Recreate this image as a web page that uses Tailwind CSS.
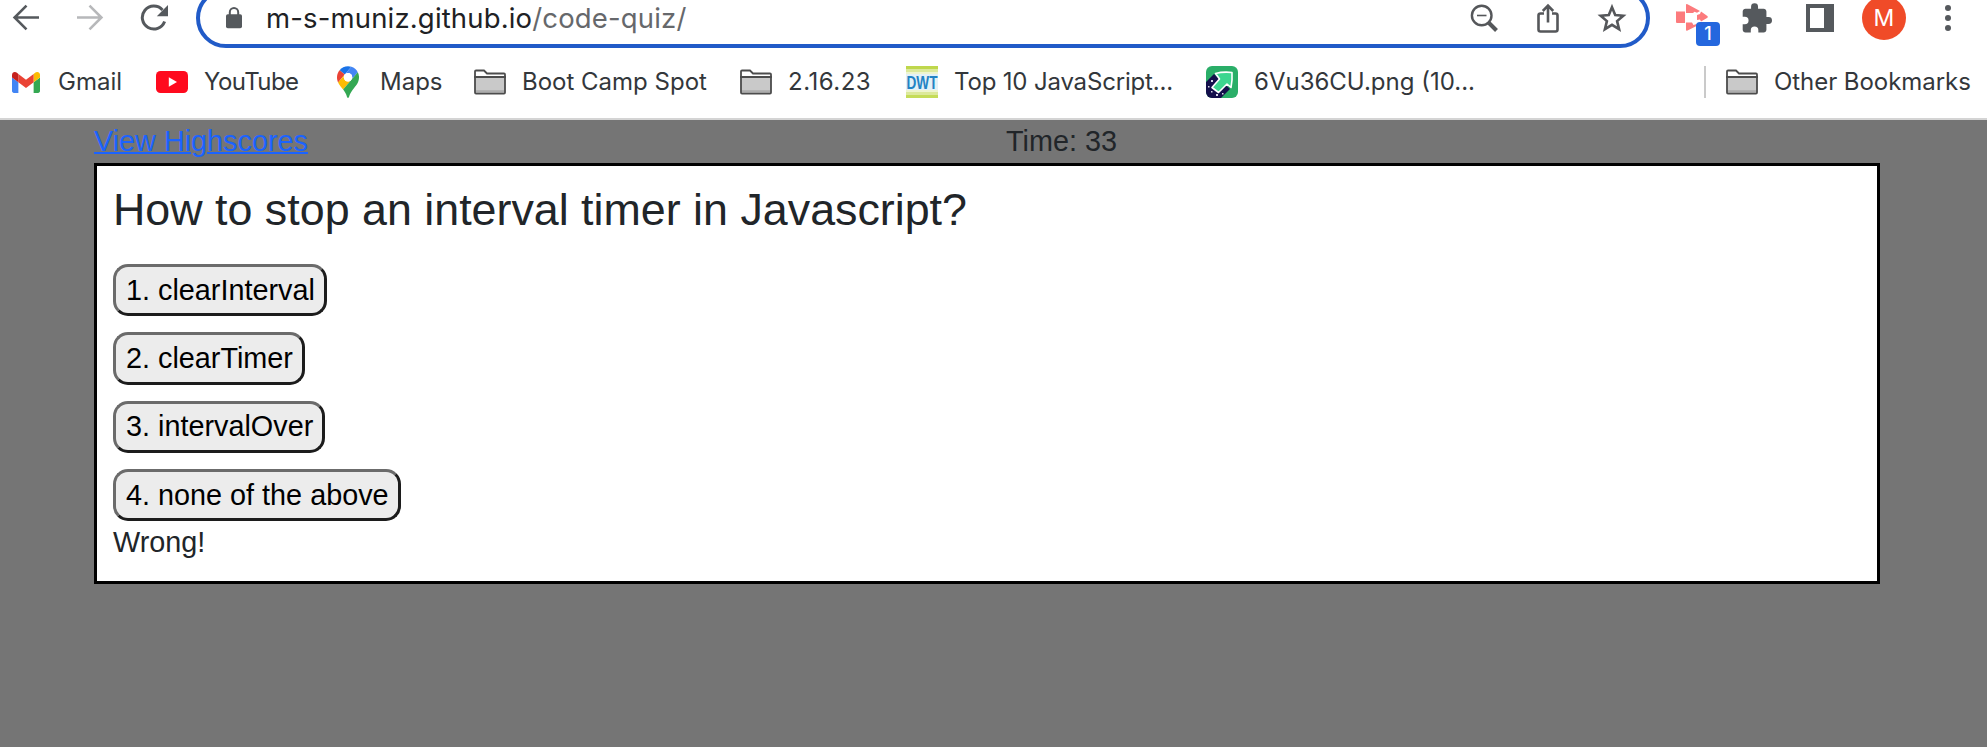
<!DOCTYPE html>
<html lang="en">
<head>
<meta charset="utf-8">
<title>Code Quiz</title>
<script src="https://cdn.jsdelivr.net/npm/@tailwindcss/browser@4"></script>
</head>
<body class="flex h-[747px] w-[1987px] flex-col overflow-hidden bg-[#757575] font-['Liberation_Sans',Arial,sans-serif] text-[#212529]">
<header class="h-[120px] shrink-0 overflow-hidden border-b-2 border-[#d4d4d4] bg-white font-[Inter,sans-serif] text-[#33373b]">
  <div class="-mt-3 flex h-[60px] items-center">
    <svg class="ml-[12px] block h-7 w-7 shrink-0" viewBox="0 0 28 28" fill="none" stroke="#55595d" stroke-width="2.6"><path d="M27 13.5H2.5M14.5 1.7L2.6 13.5l11.9 11.8"/></svg>
    <svg class="ml-[36px] block h-7 w-7 shrink-0" viewBox="0 0 28 28" fill="none" stroke="#b7b8ba" stroke-width="2.6"><path d="M1 13.5h24.5M13.5 1.7L25.4 13.5l-11.9 11.8"/></svg>
    <svg class="ml-[36px] block h-7 w-7 shrink-0" viewBox="0 0 28 28" fill="none" stroke="#55595d" stroke-width="3"><path d="M24.6 17.5A11.5 11.5 0 1 1 22.5 6"/><path d="M28 1v11.2H16.8z" fill="#55595d" stroke="none"/></svg>
    <div class="ml-[28px] flex h-[60px] w-[1454px] shrink-0 items-center rounded-full border-4 border-[#215bc8]">
      <svg class="ml-[26px] block h-[22px] w-4 shrink-0" viewBox="0 0 16 22"><rect y="7.3" width="16" height="14" rx="1.8" fill="#55595d"/><path d="M3.8 8V5.2a4.2 4.2 0 0 1 8.4 0V8" fill="none" stroke="#55595d" stroke-width="2"/></svg>
      <div class="ml-[24px] w-[1204px] whitespace-nowrap text-[27.5px] leading-8 tracking-[0.16px] text-[#202124]">m-s-muniz.github.io<span class="text-[#66686b]">/code-quiz/</span></div>
      <svg class="block h-7 w-7 shrink-0" viewBox="0 0 28 28" fill="none" stroke="#55575a"><circle cx="11.7" cy="11.5" r="9.8" stroke-width="2.4"/><path d="M7 11.5h9.5" stroke-width="1.6"/><path d="M19 19l7.5 7.5" stroke-width="4"/></svg>
      <svg class="ml-[38px] block h-[30px] w-6 shrink-0" viewBox="0 0 24 30" fill="none" stroke="#55575a" stroke-width="2.6"><path d="M8 10.5H4.5a2 2 0 0 0-2 2v14a2 2 0 0 0 2 2h15a2 2 0 0 0 2-2v-14a2 2 0 0 0-2-2H16M12 19.500V3M6.800 8L12 2.700 17.200 8"/></svg>
      <svg class="ml-[37px] block h-[30px] w-[30px] shrink-0" viewBox="0 0 30 30" fill="none" stroke="#55575a" stroke-width="2.6"><path d="M15 4.300l3.200 7.800 8.100.6-6.200 5.400 2 8.100-7.100-4.400-7.100 4.400 2-8.100-6.200-5.400 8.100-.6z"/></svg>
    </div>
    <div class="relative ml-[26px] h-8 w-11 shrink-0">
      <svg class="block h-8 w-8" viewBox="0 0 32 32" fill="#fc7b7d"><path d="M1 9.500h8V21H1q-1 0-1-1v-9.500q0-1.500 1-1.500zM10 3q0-1.500 1.500-.8L24 9l-3 1.800-2.500-1L17 11h-7zM10 20.500h6l1.500 2.500 3-1 1 1.500-10 5q-1.500.6-1.500-.8zM25 9.600l6 4.200q1.600 1.200 0 2.200l-6 3.500-1-2-3 .5v-5l3-1z"/></svg>
      <div class="absolute left-5 top-5 flex h-6 w-6 items-center justify-center rounded bg-[#2467de] text-lg font-medium text-white">1</div>
    </div>
    <svg class="ml-[22px] block h-[30px] w-[30px] shrink-0" viewBox="1.500 .9 21.500 21.500" fill="#55595d"><path d="M20.500 11H19V7c0-1.100-.9-2-2-2h-4V3.500a2.500 2.500 0 0 0-5 0V5H4c-1.100 0-2 .9-2 2v3.800h1.500a2.700 2.700 0 0 1 0 5.400H2V20c0 1.100.9 2 2 2h3.800v-1.500a2.700 2.700 0 0 1 5.400 0V22H17c1.100 0 2-.9 2-2v-4h1.500a2.500 2.500 0 0 0 0-5z"/></svg>
    <div class="ml-[34px] flex h-7 w-7 shrink-0 bg-[#55595d] p-1"><div class="h-5 w-[14px] bg-white"></div></div>
    <div class="ml-[28px] flex h-11 w-11 shrink-0 items-center justify-center rounded-full bg-[#f04b28] text-[23px] text-white">M</div>
    <svg class="ml-[39px] block h-7 w-[6px] shrink-0" viewBox="0 0 6 28" fill="#55595d"><circle cx="3" cy="4" r="3"/><circle cx="3" cy="14" r="3"/><circle cx="3" cy="24" r="3"/></svg>
  </div>
  <nav class="mt-[18px] flex h-8 items-center whitespace-nowrap text-2xl leading-8">
    <a class="ml-[12px] flex w-[144px] shrink-0 items-center gap-[18px]"><svg class="block h-[21px] w-[28px] shrink-0" viewBox="52 42 88 66"><path fill="#4285f4" d="M58 108h14V74L52 59v43c0 3.320 2.690 6 6 6"/><path fill="#34a853" d="M120 108h14c3.320 0 6-2.690 6-6V59l-20 15"/><path fill="#fbbc04" d="M120 48v26l20-15v-8c0-7.420-8.470-11.650-14.400-7.200"/><path fill="#ea4335" d="M72 74V48l24 18 24-18v26L96 92"/><path fill="#c5221f" d="M52 51v8l20 15V48l-5.600-4.200c-5.940-4.450-14.400-.22-14.400 7.200"/></svg><span>Gmail</span></a>
    <a class="flex w-[181px] shrink-0 items-center gap-4"><svg class="block h-[22px] w-8 shrink-0" viewBox="0 0 32 22"><rect width="32" height="22" rx="4.500" fill="#ff0a1e"/><path d="M12.800 6.300v9.400l8.200-4.700z" fill="#fff"/></svg><span class="tracking-[-0.55px]">YouTube</span></a>
    <a class="flex w-[137px] shrink-0 items-center gap-[21px]"><svg class="block h-8 w-[22px] shrink-0" viewBox="0 0 92.300 132.300"><path fill="#1a73e8" d="M60.200 2.200C55.800.8 51 0 46.100 0 32 0 19.300 6.400 10.800 16.500l21.800 18.300z"/><path fill="#ea4335" d="M10.800 16.500C4.100 24.500 0 34.900 0 46.100c0 8.700 1.700 15.700 4.600 22l28-33.300z"/><path fill="#4285f4" d="M46.200 28.500c9.800 0 17.700 7.900 17.700 17.700 0 4.300-1.600 8.300-4.200 11.400 0 0 13.900-16.600 27.500-32.700-5.600-10.800-15.300-19-27-22.700L32.600 34.800c3.300-3.800 8.100-6.300 13.600-6.300"/><path fill="#fbbc04" d="M46.200 63.800c-9.800 0-17.700-7.900-17.700-17.700 0-4.300 1.500-8.300 4.100-11.300l-28 33.300c4.800 10.600 12.800 19.200 21 29.900l34.100-40.500c-3.300 3.900-8.100 6.300-13.500 6.300"/><path fill="#34a853" d="M59.100 109.200c15.400-24.100 33.300-35 33.300-63 0-7.700-1.900-14.900-5.200-21.300L25.600 98c2.600 3.400 5.300 7.300 7.900 11.300 9.400 14.500 6.800 23.100 12.800 23.100s3.400-8.700 12.800-23.200"/><circle cx="46.200" cy="46.200" r="17.700" fill="#fff"/></svg><span>Maps</span></a>
    <a class="flex w-[266px] shrink-0 items-center gap-4"><svg class="block h-[26px] w-8 shrink-0" viewBox="0 0 32 26" stroke="#4c4c4c" stroke-width="1.800"><path d="M1 8V2.500q0-1 1-1h8l3 3h17q1 0 1 1V8z" fill="#fff"/><path d="M1 8h30v15.500q0 1-1 1H2q-1 0-1-1z" fill="#c9c9c9"/><path d="M2 22.400h28" stroke="#adadad" stroke-width="2.400"/></svg><span>Boot Camp Spot</span></a>
    <a class="flex w-[166px] shrink-0 items-center gap-4"><svg class="block h-[26px] w-8 shrink-0" viewBox="0 0 32 26" stroke="#4c4c4c" stroke-width="1.800"><path d="M1 8V2.500q0-1 1-1h8l3 3h17q1 0 1 1V8z" fill="#fff"/><path d="M1 8h30v15.500q0 1-1 1H2q-1 0-1-1z" fill="#c9c9c9"/><path d="M2 22.400h28" stroke="#adadad" stroke-width="2.400"/></svg><span class="tracking-[0.5px]">2.16.23</span></a>
    <a class="flex w-[300px] shrink-0 items-center gap-4"><svg class="block h-8 w-8 shrink-0" viewBox="0 0 32 32"><rect width="32" height="32" fill="#eef5cf"/><rect width="32" height="3" fill="#bfd74c"/><rect y="3" width="32" height="3" fill="#dce99a"/><rect y="8" width="32" height="16" fill="#e3f1f7"/><rect y="26" width="32" height="3" fill="#dce99a"/><rect y="29" width="32" height="3" fill="#c5dc58"/><text x="0.500" y="22.500" font-size="17.500" font-weight="700" font-family="Liberation Sans" textLength="31" lengthAdjust="spacingAndGlyphs" fill="#2383c4">DWT</text></svg><span class="tracking-[-0.17px]">Top 10 JavaScript...</span></a>
    <a class="flex w-[498px] shrink-0 items-center gap-4"><svg class="block h-8 w-8 shrink-0" viewBox="0 0 32 32"><rect width="32" height="32" rx="6" fill="#2aae68"/><path d="M0 16l8-8 16 15-9 9H6a6 6 0 0 1-6-6z" fill="#140f4b"/><path d="M9.500 7.500Q17 5.500 26 6.500q.500 8-1 15l-4-3.500-8.500 8.500-6.500-5 7.500-8.500z" fill="#3cd68f" stroke="#fff" stroke-width="1.600" stroke-linejoin="round"/><path d="M5 14h2v2H5zM2 20h1.500v1.500H2zM5 25h1.500v1.500H5zM10 28h2v2h-2zM16 27h1.500v1.500H16z" fill="#d8d7e8"/></svg><span>6Vu36CU.png (10...</span></a>
    <i class="block h-8 w-[2px] shrink-0 bg-[#cacaca]"></i>
    <a class="ml-[20px] flex shrink-0 items-center gap-4"><svg class="block h-[26px] w-8 shrink-0" viewBox="0 0 32 26" stroke="#4c4c4c" stroke-width="1.800"><path d="M1 8V2.500q0-1 1-1h8l3 3h17q1 0 1 1V8z" fill="#fff"/><path d="M1 8h30v15.500q0 1-1 1H2q-1 0-1-1z" fill="#c9c9c9"/><path d="M2 22.400h28" stroke="#adadad" stroke-width="2.400"/></svg><span class="tracking-[-0.05px]">Other Bookmarks</span></a>
  </nav>
</header>
<main class="ml-[94px] w-[1786px] text-[28.8px] leading-[43px]">
  <div class="flex h-[43px]">
    <a class="w-[912px] text-[#1b63ff] underline decoration-2">View Highscores</a>
    <span>Time: 33</span>
  </div>
  <section class="flex h-[421px] flex-col items-start border-[3px] border-black bg-white px-4 pt-4">
    <h2 class="mb-[29px] text-[44.8px] leading-[54px]">How to stop an interval timer in Javascript?</h2>
    <div class="-mt-px flex flex-col items-start gap-4 text-black">
      <button class="h-[52.3px] rounded-[15px] border-[3px] border-t-[#6b6b6b] border-l-[#6b6b6b] border-r-[#1c1c1c] border-b-[#1c1c1c] bg-[#ececec] pl-[10px] pr-[9px] leading-[43px]">1. clearInterval</button>
      <button class="h-[52.3px] rounded-[15px] border-[3px] border-t-[#6b6b6b] border-l-[#6b6b6b] border-r-[#1c1c1c] border-b-[#1c1c1c] bg-[#ececec] pl-[10px] pr-[9px] leading-[43px]">2. clearTimer</button>
      <button class="h-[52.3px] rounded-[15px] border-[3px] border-t-[#6b6b6b] border-l-[#6b6b6b] border-r-[#1c1c1c] border-b-[#1c1c1c] bg-[#ececec] pl-[10px] pr-[9px] leading-[43px]">3. intervalOver</button>
      <button class="h-[52.3px] rounded-[15px] border-[3px] border-t-[#6b6b6b] border-l-[#6b6b6b] border-r-[#1c1c1c] border-b-[#1c1c1c] bg-[#ececec] pl-[10px] pr-[9px] leading-[43px]">4. none of the above</button>
    </div>
    <p>Wrong!</p>
  </section>
</main>
</body>
</html>
